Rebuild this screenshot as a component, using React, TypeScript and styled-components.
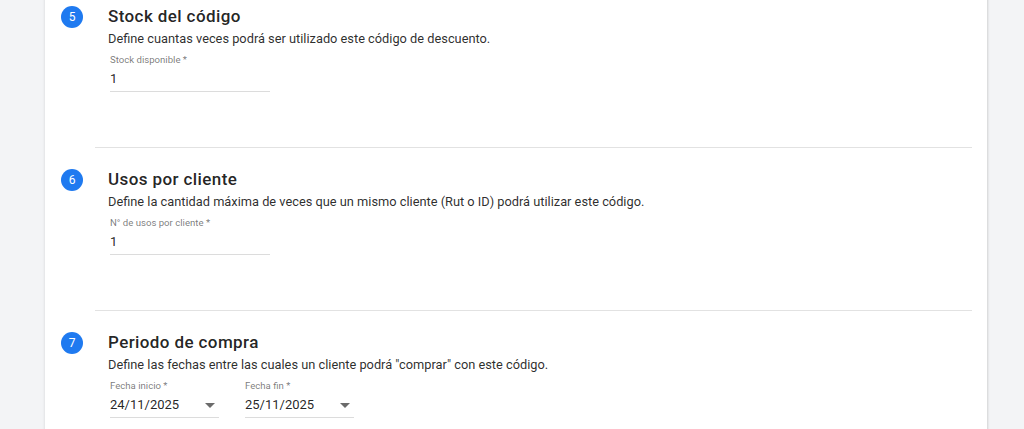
import React from "react"
import styled, { createGlobalStyle } from "styled-components"

const GlobalStyle = createGlobalStyle`
  html, body {
    margin: 0;
    padding: 0;
    background: #f3f4f6;
    font-family: "Roboto", "Liberation Sans", sans-serif;
    overflow: hidden;
  }
`

const Page = styled.div`
  height: 429px;
  padding: 0 37px 0 45px;
  overflow: hidden;
`

const Card = styled.div`
  margin-top: -15px;
  background: #ffffff;
  box-shadow: 0 1px 3px rgba(0, 0, 0, 0.12), 1px 0 2px rgba(0, 0, 0, 0.08);
  padding: 0 15px 0 16px;
`

const Section = styled.div`
  display: flex;
  gap: 25px;
  padding: 20px 0 55px;
`

const Divider = styled.hr`
  margin: 0 0 0 34px;
  border: none;
  border-top: 1px solid #e2e2e2;
`

const StepBadge = styled.div`
  flex: none;
  width: 22px;
  height: 22px;
  margin-top: 1px;
  border-radius: 50%;
  background: #1f7af0;
  color: #ffffff;
  font-size: 12px;
  display: flex;
  align-items: center;
  justify-content: center;
`

const Content = styled.div`
  display: flex;
  flex-direction: column;
`

const Title = styled.div`
  font-size: 17px;
  font-weight: 500;
  letter-spacing: 0.4px;
  line-height: 22px;
  color: rgba(0, 0, 0, 0.87);
`

const Description = styled.div`
  margin-top: 2px;
  font-size: 12.8px;
  line-height: 20px;
  color: rgba(0, 0, 0, 0.84);
`

const Fields = styled.div`
  display: flex;
  gap: 26px;
  margin-top: 4px;
  padding-left: 2px;
`

const Field = styled.div<{ $width: number }>`
  width: ${(p) => p.$width}px;
  border-bottom: 1px solid #dcdcdc;
  padding-bottom: 4px;
`

const Label = styled.div`
  font-size: 9.6px;
  line-height: 14px;
  color: rgba(0, 0, 0, 0.54);
`

const ValueRow = styled.div`
  display: flex;
  align-items: center;
  justify-content: space-between;
  margin-top: 4px;
  font-size: 13px;
  line-height: 16px;
  color: rgba(0, 0, 0, 0.87);
`

const Caret = styled.span`
  width: 0;
  height: 0;
  margin-right: 4px;
  border-left: 5px solid transparent;
  border-right: 5px solid transparent;
  border-top: 5px solid #6b6b6b;
`

interface FieldProps {
  label: string
  value: string
  width: number
  select?: boolean
}

const InputField: React.FC<FieldProps> = ({ label, value, width, select }) => (
  <Field $width={width}>
    <Label>{label}</Label>
    <ValueRow>
      <span>{value}</span>
      {select && <Caret />}
    </ValueRow>
  </Field>
)

const steps = [
  {
    n: 5,
    title: "Stock del código",
    desc: "Define cuantas veces podrá ser utilizado este código de descuento.",
    fields: [{ label: "Stock disponible *", value: "1", width: 160 }],
  },
  {
    n: 6,
    title: "Usos por cliente",
    desc: "Define la cantidad máxima de veces que un mismo cliente (Rut o ID) podrá utilizar este código.",
    fields: [{ label: "N° de usos por cliente *", value: "1", width: 160 }],
  },
  {
    n: 7,
    title: "Periodo de compra",
    desc: 'Define las fechas entre las cuales un cliente podrá "comprar" con este código.',
    fields: [
      { label: "Fecha inicio *", value: "24/11/2025", width: 109, select: true },
      { label: "Fecha fin *", value: "25/11/2025", width: 109, select: true },
    ],
  },
]

export default function App() {
  return (
    <>
      <GlobalStyle />
      <Page>
        <Card>
          {steps.map((s, i) => (
            <React.Fragment key={s.n}>
              {i > 0 && <Divider />}
              <Section>
                <StepBadge>{s.n}</StepBadge>
                <Content>
                  <Title>{s.title}</Title>
                  <Description>{s.desc}</Description>
                  <Fields>
                    {s.fields.map((f) => (
                      <InputField key={f.label} {...f} />
                    ))}
                  </Fields>
                </Content>
              </Section>
            </React.Fragment>
          ))}
        </Card>
      </Page>
    </>
  )
}
